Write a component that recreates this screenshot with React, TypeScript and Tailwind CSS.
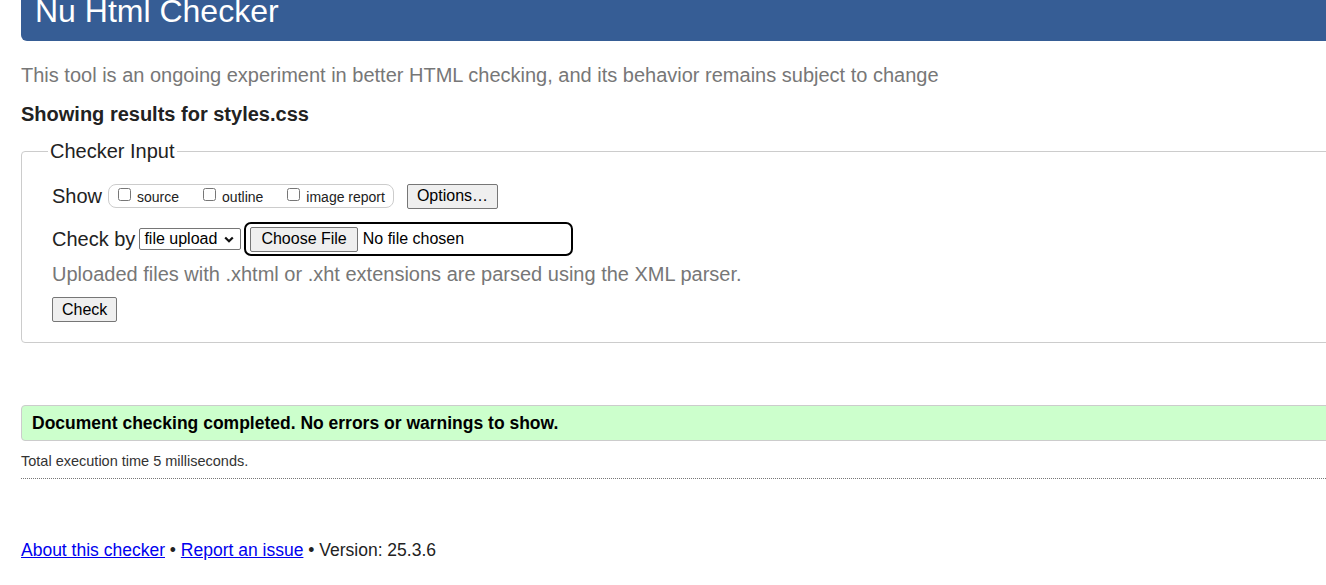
const showOptions = [
  { key: "source", label: "source" },
  { key: "outline", label: "outline" },
  { key: "image", label: "image report" },
];

function Button({ children, className = "" }: { children: React.ReactNode; className?: string }) {
  return (
    <button
      type="button"
      className={`h-[25px] rounded-[2px] border border-[#767676] bg-[#efefef] px-[9px] text-[16px] leading-[18px] text-black ${className}`}
    >
      {children}
    </button>
  );
}

export default function App() {
  return (
    <div className="h-[585px] overflow-hidden bg-white font-['Liberation_Sans',Arial,sans-serif] text-[#222]">
      <div className="w-[1400px] pl-[21px]">
        <header className="h-[41px] rounded-bl-[6px] bg-[#365d95] pl-[14px]">
          <h1 className="text-[32px] leading-[22px] text-white">Nu Html Checker</h1>
        </header>

        <p className="mt-[22px] text-[20px] leading-[24px] text-[#777]">
          This tool is an ongoing experiment in better HTML checking, and its behavior remains subject to change
        </p>

        <h2 className="mt-[15px] text-[20px] font-bold leading-[24px]">Showing results for styles.css</h2>

        <fieldset className="mt-[13px] rounded-[4px] border border-[#ccc]">
          <legend className="ml-[26px] px-[2px] text-[20px] leading-[24px]">Checker Input</legend>
          <div className="pb-[20px] pl-[30px]">
            <div className="mt-[20px] flex h-[26px] items-center">
              <span className="text-[20px] leading-[24px]">Show</span>
              <div className="ml-[6px] flex h-[24px] items-center rounded-[8px] border border-[#ccc] pl-[9px] pr-[8px]">
                {showOptions.map((opt, i) => (
                  <label key={opt.key} className={`flex items-end gap-[6px] ${i > 0 ? "ml-[24px]" : ""}`}>
                    <input type="checkbox" className="m-0 mb-[4px] h-[13px] w-[13px]" />
                    <span className="text-[14px] leading-[16px]">{opt.label}</span>
                  </label>
                ))}
              </div>
              <Button className="ml-[13px]">Options…</Button>
            </div>

            <div className="mt-[13px] flex h-[34px] items-center">
              <span className="text-[20px] leading-[24px]">Check by</span>
              <div className="ml-[4px] flex h-[22px] w-[102px] items-center justify-between rounded-[2px] border border-[#767676] bg-white pl-[4px] pr-[6px] text-[16px] text-black">
                <span>file upload</span>
                <svg width="10" height="7" viewBox="0 0 10 7" fill="none">
                  <path d="M1.2 1.5l3.8 3.8 3.8-3.8" stroke="#111" strokeWidth="2.2" />
                </svg>
              </div>
              <div className="ml-[3px] flex h-[34px] w-[329px] items-center rounded-[7px] border-2 border-black pl-[4px]">
                <Button className="px-[10px]">Choose File</Button>
                <span className="ml-[5px] text-[16px] text-black">No file chosen</span>
              </div>
            </div>

            <p className="mt-[6px] text-[20px] leading-[24px] text-[#777]">
              Uploaded files with .xhtml or .xht extensions are parsed using the XML parser.
            </p>

            <Button className="mt-[11px]">Check</Button>
          </div>
        </fieldset>

        <div className="mt-[62px] flex h-[36px] items-center rounded-[4px] border border-[#ccc] bg-[#cfc] pl-[10px] text-[17.5px] font-bold text-black">
          Document checking completed. No errors or warnings to show.
        </div>

        <p className="mt-[12px] text-[14.5px] leading-[17px] text-[#333]">Total execution time 5 milliseconds.</p>

        <div className="mt-[8px] border-b border-dotted border-[#777]" />

        <p className="mt-[61px] text-[17.5px] leading-[20px]">
          <a href="#" className="text-[#00e] underline">About this checker</a>
          {" • "}
          <a href="#" className="text-[#00e] underline">Report an issue</a>
          {" • Version: 25.3.6"}
        </p>
      </div>
    </div>
  );
}
